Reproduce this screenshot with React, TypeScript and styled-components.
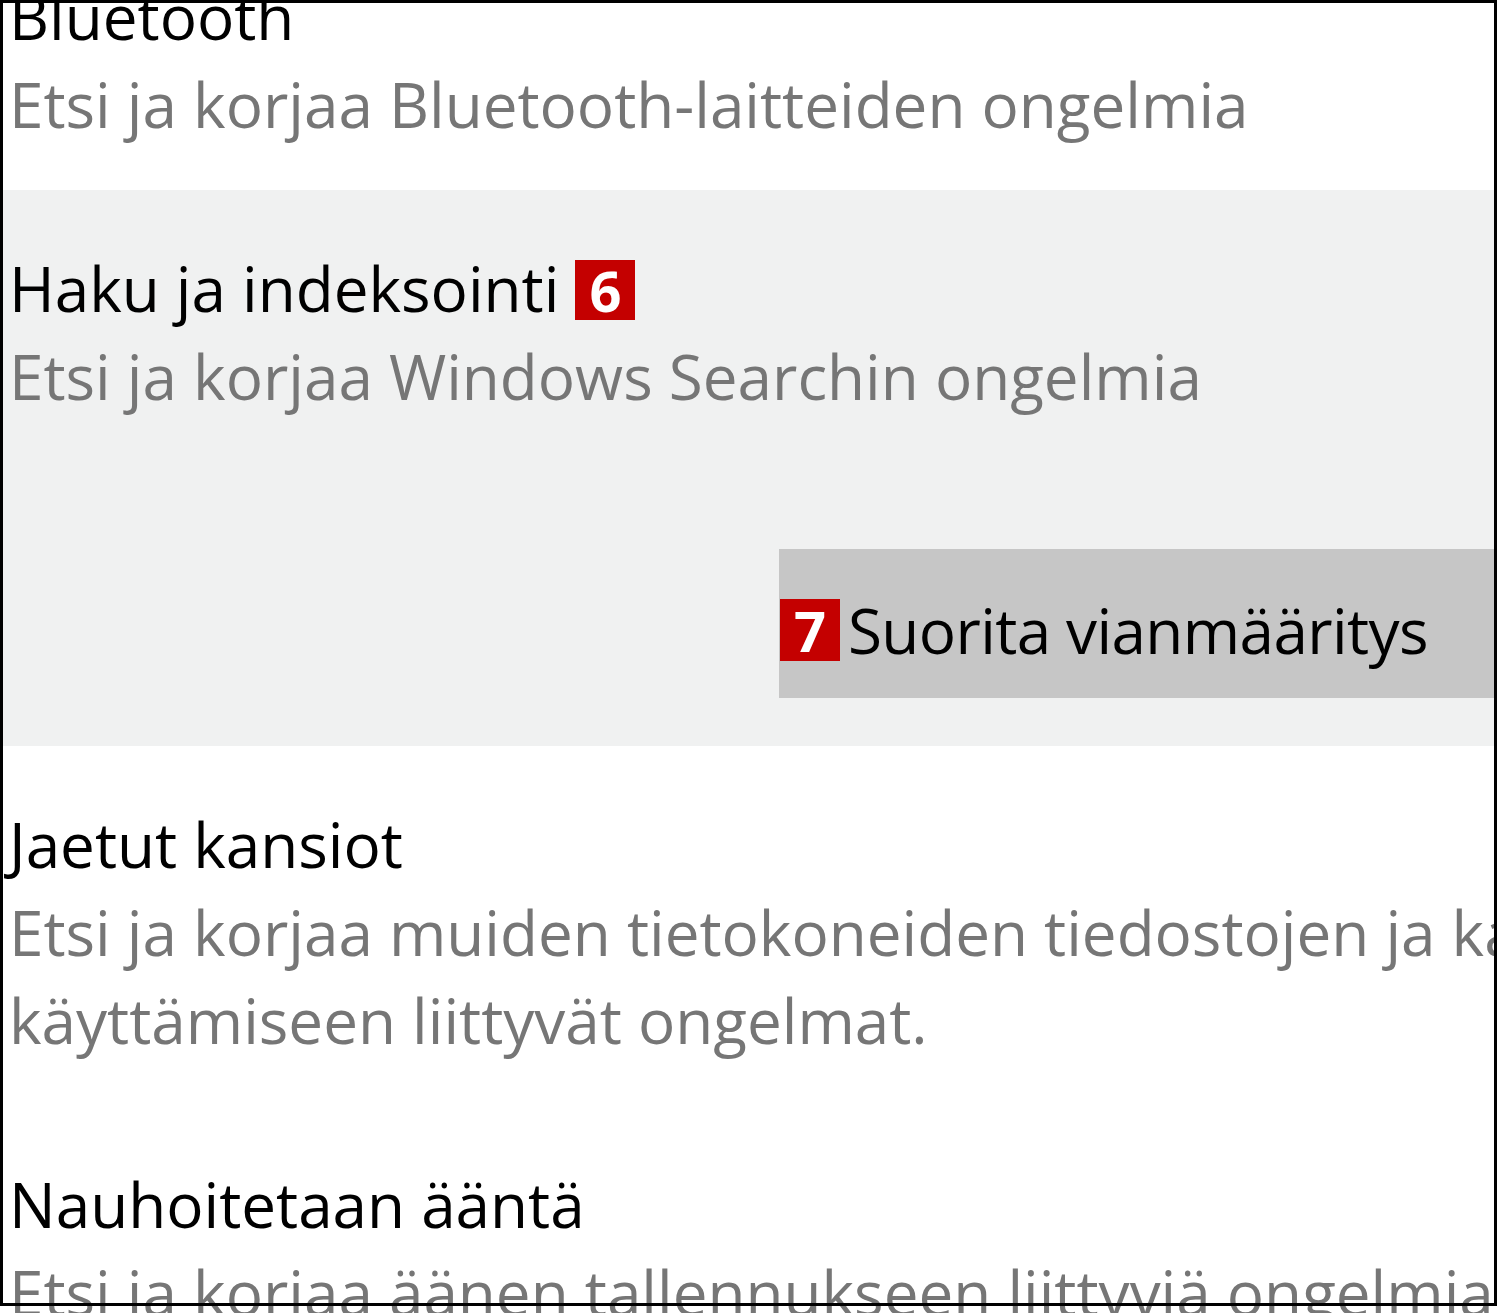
import styled, { createGlobalStyle } from "styled-components";

const GlobalStyle = createGlobalStyle`
  html, body {
    margin: 0;
    padding: 0;
    background: #fff;
    overflow: hidden;
  }
`;

const App = () => {
  return (
    <>
      <GlobalStyle />
      <Viewport>
        <List>
          <Item>
            <Title>Bluetooth</Title>
            <Description>Etsi ja korjaa Bluetooth-laitteiden ongelmia</Description>
          </Item>
          <Item $active>
            <Title>
              Haku ja indeksointi <InlineBadge>6</InlineBadge>
            </Title>
            <Description>Etsi ja korjaa Windows Searchin ongelmia</Description>
            <ButtonRow>
              <RunButton>
                <ButtonBadge>7</ButtonBadge>
                <ButtonLabel>Suorita vianmääritys</ButtonLabel>
              </RunButton>
            </ButtonRow>
          </Item>
          <Item>
            <Title>Jaetut kansiot</Title>
            <Description>
              Etsi ja korjaa muiden tietokoneiden tiedostojen ja kansioiden
              <br />
              käyttämiseen liittyvät ongelmat.
            </Description>
          </Item>
          <Item>
            <Title>Nauhoitetaan ääntä</Title>
            <Description>Etsi ja korjaa äänen tallennukseen liittyviä ongelmia</Description>
          </Item>
        </List>
        <Frame />
      </Viewport>
    </>
  );
};

const Viewport = styled.div`
  position: relative;
  width: 1500px;
  height: 1313px;
  overflow: hidden;
  background: #fff;
  font-family: "Open Sans", "Noto Sans", sans-serif;
`;

// the screenshot's black frame is drawn over the list
const Frame = styled.div`
  position: absolute;
  left: 0;
  top: 0;
  width: 1497px;
  height: 1306px;
  box-sizing: border-box;
  border: 3px solid #000;
  pointer-events: none;
`;

const List = styled.div`
  display: flex;
  flex-direction: column;
  margin: -82px 0 0 3px;
  width: 1491px;
  overflow-x: clip;
`;

const Item = styled.div<{ $active?: boolean }>`
  display: flex;
  flex-direction: column;
  padding: 54px 0 42px 6px;
  background: ${(p) => (p.$active ? "#f0f1f1" : "transparent")};
`;

const Title = styled.div`
  font-size: 62px;
  line-height: 88px;
  color: #000;
  white-space: nowrap;
`;

const Description = styled.div`
  font-size: 62px;
  line-height: 88px;
  color: #767676;
  white-space: nowrap;
`;

const Badge = styled.span`
  display: inline-flex;
  align-items: center;
  justify-content: center;
  width: 60px;
  height: 60px;
  background: #c40000;
  color: #fff;
  font-weight: 700;
  font-size: 56px;
  line-height: 60px;
`;

const InlineBadge = styled(Badge)`
  display: inline-block;
  text-align: center;
  overflow: hidden;
  vertical-align: -8px;
`;

const ButtonRow = styled.div`
  display: flex;
  justify-content: flex-end;
  margin: 129px 0 6px;
`;

const RunButton = styled.div`
  display: flex;
  align-items: flex-start;
  gap: 8px;
  box-sizing: border-box;
  height: 149px;
  padding: 37px 66px 0 1px;
  background: #c6c6c6;
`;

const ButtonBadge = styled(Badge)`
  margin-top: 13px;
  height: 62px;
`;

const ButtonLabel = styled.span`
  font-size: 62px;
  line-height: 88px;
  letter-spacing: -0.6px;
  color: #000;
`;

export default App;
